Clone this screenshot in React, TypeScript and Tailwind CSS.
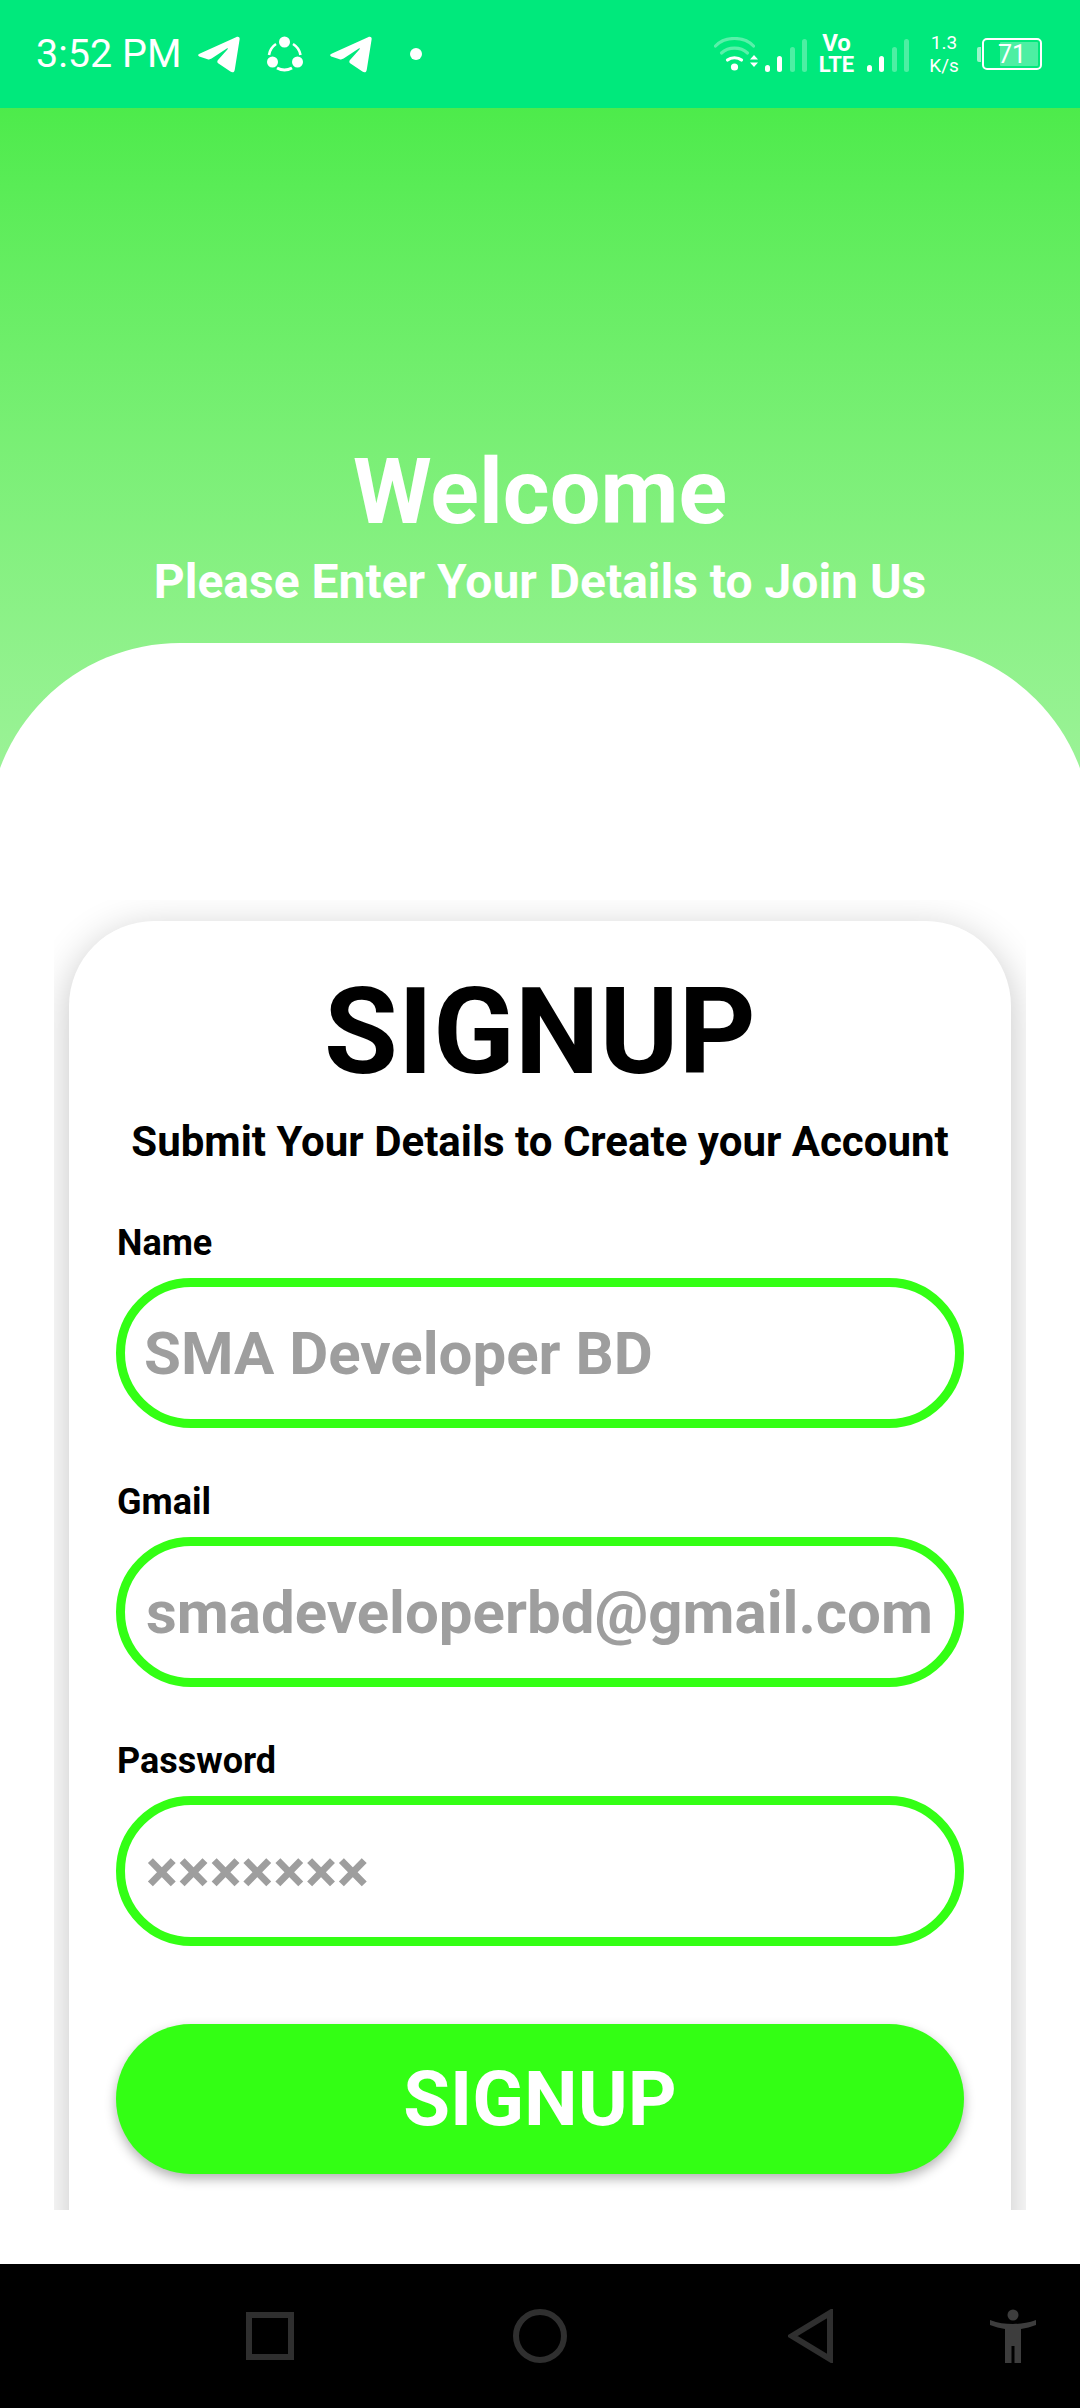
import React from "react";

const Plane = () => (
  <svg width="42" height="37" viewBox="0 0 42 37" fill="white">
    <path d="M2 17.5 L38 1.2 C40.5 0 42 1.2 41.6 3.6 L36.8 33.5 C36.4 36.4 34.6 37 32.4 35.6 L20.5 27.6 C19 26.6 19 25.2 20 24 L29.6 13.2 C30.2 12.4 29.6 11.8 28.8 12.4 L13.6 22.6 C12.4 23.4 11 23.6 9.6 23.2 L2 20.8 C-0.4 20 -0.4 18.6 2 17.5 Z" />
  </svg>
);

const Share = () => (
  <svg width="36" height="36" viewBox="0 0 36 36" fill="none">
    <circle cx="17.5" cy="6" r="5.5" fill="white" />
    <circle cx="5.5" cy="26" r="5.5" fill="white" />
    <circle cx="30.5" cy="26" r="5.5" fill="white" />
    <path d="M9 8 A16 16 0 0 0 2 19" stroke="white" strokeWidth="2.6" />
    <path d="M26 8 A16 16 0 0 1 33.5 19" stroke="white" strokeWidth="2.6" />
    <path d="M10 32 A16 16 0 0 0 25 32" stroke="white" strokeWidth="3" />
  </svg>
);

const Bars = () => (
  <svg width="43" height="33" viewBox="0 0 43 33">
    <rect x="0" y="26" width="5" height="7" rx="2.5" fill="white" />
    <rect x="12" y="17" width="5" height="16" rx="2.5" fill="white" />
    <rect x="25" y="8" width="5" height="25" rx="2.5" fill="white" fillOpacity=".3" />
    <rect x="37" y="0" width="5" height="33" rx="2.5" fill="white" fillOpacity=".3" />
  </svg>
);

const Wifi = () => (
  <svg width="41" height="34" viewBox="0 0 41 34" fill="none">
    <path d="M1.5 9 C11 -1 30 -1 39.5 9" stroke="white" strokeOpacity=".35" strokeWidth="3.2" strokeLinecap="round" />
    <path d="M7.5 16 C14.5 9.5 26.5 9.5 33.5 16" stroke="white" strokeOpacity=".35" strokeWidth="3.2" strokeLinecap="round" />
    <path d="M13.5 23 C17 20 24 20 27.5 23" stroke="white" strokeWidth="3.2" strokeLinecap="round" />
    <circle cx="20.5" cy="30" r="3.6" fill="white" />
  </svg>
);

const Arrows = () => (
  <svg width="8" height="12" viewBox="0 0 8 12" fill="white">
    <path d="M4 0 L8 4.5 H0 Z" />
    <path d="M4 12 L8 7.5 H0 Z" />
  </svg>
);

const Field = ({ label, placeholder, inset }: { label: string; placeholder: string; inset: string }) => (
  <div className="flex flex-col">
    <label className="pl-[1px] text-[36px] font-bold leading-[41px] text-black">{label}</label>
    <input
      readOnly
      placeholder={placeholder}
      className={`mt-[14px] h-[150px] w-full rounded-[75px] border-[9px] border-[#33ff14] bg-white pr-[8px] text-[60px] font-bold outline-none placeholder:text-[#9e9e9e] ${inset}`}
    />
  </div>
);

export default function App() {
  return (
    <div
      className="flex h-[2408px] w-[1080px] flex-col overflow-hidden bg-white"
      style={{ fontFamily: "Roboto, sans-serif" }}
    >
      {/* status bar */}
      <div className="flex h-[108px] shrink-0 items-center justify-between bg-[#00e97c] pl-[36px] pr-[38px] text-white">
        <div className="flex items-center">
          <span className="text-[39.5px] leading-none">3:52 PM</span>
          <span className="ml-[17px] flex"><Plane /></span>
          <span className="ml-[27px] flex"><Share /></span>
          <span className="ml-[27px] flex"><Plane /></span>
          <span className="ml-[38px] h-[12px] w-[12px] rounded-full bg-white" />
        </div>
        <div className="flex items-center">
          <Wifi />
          <span className="ml-[-5px] mt-[14px] flex"><Arrows /></span>
          <span className="ml-[7px] mt-[2px] flex"><Bars /></span>
          <span className="ml-[10px] flex w-[37px] flex-col items-center text-[22px] font-bold leading-[22px]">
            <span className="text-[24px] leading-[22px]">Vo</span>
            <span>LTE</span>
          </span>
          <span className="ml-[12px] mt-[2px] flex"><Bars /></span>
          <span className="ml-[20px] flex w-[28px] flex-col items-center text-[19px] leading-[23px]">
            <span>1.3</span>
            <span>K/s</span>
          </span>
          <span className="ml-[19px] flex items-center">
            <span className="h-[15px] w-[4px] rounded-l-[2px] bg-white/60" />
            <span className="relative ml-[1px] flex h-[32px] w-[60px] items-center justify-center rounded-[5px] border-[2px] border-white text-[25px] leading-none">
              <span className="absolute bottom-[2px] right-[2px] top-[2px] w-[38px] rounded-[1px] bg-white/30" />
              <span className="relative">71</span>
            </span>
          </span>
        </div>
      </div>

      {/* header */}
      <div className="flex h-[720px] shrink-0 flex-col items-center bg-gradient-to-b from-[#4deb4b] to-[#a0f39c] pt-[334px] text-white">
        <h1 className="text-[90px] font-bold leading-[102px]">Welcome</h1>
        <p className="mt-[10px] text-[48px] font-bold leading-[55px]">Please Enter Your Details to Join Us</p>
      </div>

      {/* panel */}
      <div className="relative -mx-3 mt-[-185px] h-[1621px] shrink-0 rounded-t-[192px] bg-white pt-[257px]">
        <div className="mx-[66px] h-[1310px] overflow-hidden px-[15px] pt-[21px]">
          <div className="h-[1400px] rounded-[85px] bg-white px-[47px] pt-[49px] shadow-[0_10px_40px_rgba(0,0,0,0.24)]">
            <h2 className="text-center text-[120px] font-bold leading-[124px] text-black">SIGNUP</h2>
            <p className="mt-[23px] text-center text-[42px] font-bold leading-[50px] text-black">
              Submit Your Details to Create your Account
            </p>
            <div className="mt-[56px] flex flex-col gap-[54px]">
              <Field label="Name" placeholder="SMA Developer BD" inset="pl-[19px]" />
              <Field label="Gmail" placeholder="smadeveloperbd@gmail.com" inset="pl-[21px]" />
              <Field label="Password" placeholder="×××××××" inset="pl-[21px]" />
            </div>
            <button className="mt-[78px] h-[150px] w-full rounded-[75px] bg-[#33ff14] text-[76px] font-bold text-white shadow-[0_5px_12px_rgba(0,0,0,0.3)]">
              SIGNUP
            </button>
          </div>
        </div>
      </div>

      {/* nav */}
      <div className="flex h-[144px] shrink-0 items-center bg-black pb-[1px] pl-[246px]">
        <svg width="48" height="48" viewBox="0 0 48 48" fill="none">
          <rect x="3" y="3" width="42" height="42" stroke="#2f2f2f" strokeWidth="6" />
        </svg>
        <svg className="ml-[219px]" width="54" height="54" viewBox="0 0 54 54" fill="none">
          <circle cx="27" cy="27" r="24" stroke="#2f2f2f" strokeWidth="6" />
        </svg>
        <svg className="ml-[221px]" width="46" height="54" viewBox="0 0 46 54" fill="none">
          <path d="M42 4 V50 L4 27 Z" stroke="#2f2f2f" strokeWidth="6" />
        </svg>
        <svg className="ml-[156px]" width="46" height="54" viewBox="0 0 46 54" fill="#3d3d3d">
          <ellipse cx="23" cy="6" rx="5.5" ry="5.5" />
          <path d="M0 11 C8 14 15 15 23 15 C31 15 38 14 46 11 L46 16 C41 18 36 19 31 20 L31 54 L24.5 54 L24.5 37 L21.5 37 L21.5 54 L15 54 L15 20 C10 19 5 18 0 16 Z" />
        </svg>
      </div>
    </div>
  );
}
